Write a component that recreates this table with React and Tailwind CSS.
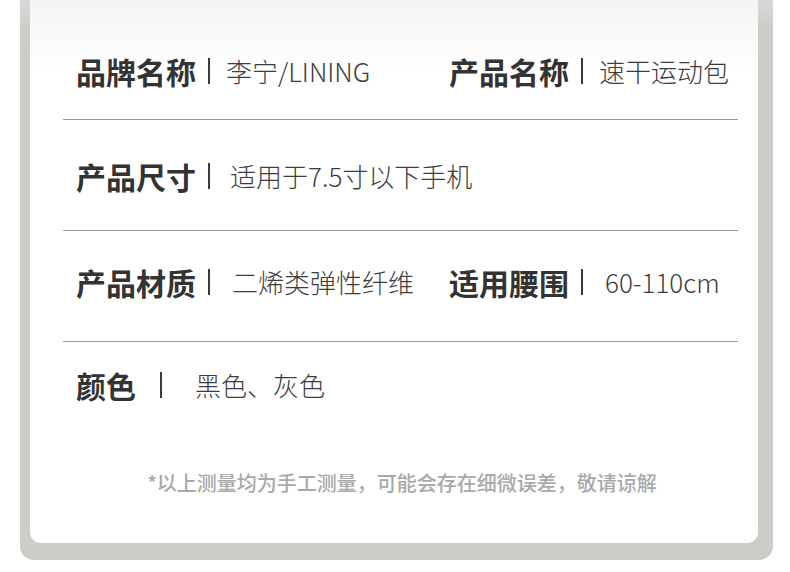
const font = { fontFamily: '"Noto Sans CJK SC", "Noto Sans", sans-serif' };

function Field({ label, value, barGap = 'ml-[12px]', valueGap = 'ml-[16px]', className = '' }) {
  return (
    <div className={`flex items-center ${className}`}>
      <span className="text-[30px] leading-[30px] font-bold text-[#333333] whitespace-nowrap">{label}</span>
      <span className={`${barGap} h-[26px] w-[2px] bg-[#3a3a3a]`} />
      <span className={`${valueGap} text-[26px] leading-[30px] font-light text-[#3d3d3d] whitespace-nowrap`}>{value}</span>
    </div>
  );
}

export default function App() {
  return (
    <div className="w-[790px] h-[572px] bg-white" style={font}>
      <div className="ml-[20px] w-[753px] h-[560px] pl-[10px] pr-[15px] pb-[17px] rounded-b-[14px] bg-[linear-gradient(to_bottom,#d8d8d8,#cdccc7_28px)]">
        <div className="h-full rounded-b-[11px] bg-[linear-gradient(to_bottom,#f4f4f4,#ffffff_70px)] pl-[33px] pr-[20px]">
          {/* row 1 */}
          <div className="flex pt-[56px] pb-[33px] pl-[13px] border-b border-[#9c9c9c]">
            <Field label="品牌名称" value="李宁/LINING" className="w-[373px]" />
            <Field label="产品名称" value="速干运动包" />
          </div>
          {/* row 2 */}
          <div className="flex pt-[41px] pb-[39px] pl-[13px] border-b border-[#9c9c9c]">
            <Field label="产品尺寸" value="适用于7.5寸以下手机" valueGap="ml-[20px]" />
          </div>
          {/* row 3 */}
          <div className="flex pt-[36px] pb-[44px] pl-[13px] border-b border-[#9c9c9c]">
            <Field label="产品材质" value="二烯类弹性纤维" valueGap="ml-[22px]" className="w-[373px]" />
            <Field label="适用腰围" value="60-110cm" valueGap="ml-[22px]" />
          </div>
          {/* row 4 */}
          <div className="flex pt-[28px] pl-[13px]">
            <Field label="颜色" value="黑色、灰色" barGap="ml-[24px]" valueGap="ml-[33px]" />
          </div>
          <p className="mt-[71px] pl-[3px] text-center text-[20px] leading-[24px] font-medium text-[#a9a9a9]">
            *以上测量均为手工测量，可能会存在细微误差，敬请谅解
          </p>
        </div>
      </div>
    </div>
  );
}
